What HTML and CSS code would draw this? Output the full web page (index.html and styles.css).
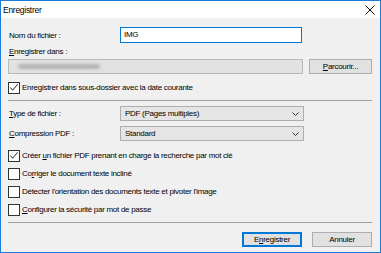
FILE: index.html
```html
<!DOCTYPE html>
<html lang="fr">
<head>
    <meta charset="UTF-8">
    <title>Enregistrer</title>
    <link rel="stylesheet" href="styles.css">
</head>
<body>
    <div class="window">
        <div class="titlebar">
            <span class="title">Enregistrer</span>
            <svg class="close" width="10" height="10" viewBox="0 0 10 10">
                <path d="M0.5 0.5 L9.5 9.5 M9.5 0.5 L0.5 9.5" stroke="#111" stroke-width="1" fill="none"/>
            </svg>
        </div>

        <div class="body">
            <div class="row row-name">
                <span class="label">Nom du fichier :</span>
                <div class="input input-focus">IMG</div>
            </div>

            <div class="label label-dir"><u>E</u>nregistrer dans :</div>
            <div class="row row-dir">
                <div class="input input-disabled"><span class="blur"></span></div>
                <div class="btn btn-browse"><u>P</u>arcourir...</div>
            </div>

            <div class="check check-sub">
                <span class="box checked">
                    <svg width="11" height="11" viewBox="0 0 11 11"><path d="M1.5 5.5 L4 8.5 L9.5 2" stroke="#222" stroke-width="1.1" fill="none"/></svg>
                </span>
                <span>Enregistrer dans sous-dossier avec la date courante</span>
            </div>

            <div class="sep sep-top"></div>

            <div class="row row-select first">
                <span class="label"><u>T</u>ype de fichier :</span>
                <div class="select">
                    <span>PDF (Pages multiples)</span>
                    <svg width="7" height="4" viewBox="0 0 7 4"><path d="M0.5 0.5 L3.5 3.5 L6.5 0.5" stroke="#333" stroke-width="1" fill="none"/></svg>
                </div>
            </div>
            <div class="row row-select">
                <span class="label"><u>C</u>ompression PDF :</span>
                <div class="select">
                    <span>Standard</span>
                    <svg width="7" height="4" viewBox="0 0 7 4"><path d="M0.5 0.5 L3.5 3.5 L6.5 0.5" stroke="#333" stroke-width="1" fill="none"/></svg>
                </div>
            </div>

            <div class="check check-first">
                <span class="box checked">
                    <svg width="11" height="11" viewBox="0 0 11 11"><path d="M1.5 5.5 L4 8.5 L9.5 2" stroke="#222" stroke-width="1.1" fill="none"/></svg>
                </span>
                <span>Créer <u>u</u>n fichier PDF prenant en charge la recherche par mot clé</span>
            </div>
            <div class="check">
                <span class="box"></span>
                <span>Co<u>r</u>riger le document texte incliné</span>
            </div>
            <div class="check">
                <span class="box"></span>
                <span>Détecter l'orientation des documents texte et pivoter l'image</span>
            </div>
            <div class="check">
                <span class="box"></span>
                <span><u>C</u>onfigurer la sécurité par mot de passe</span>
            </div>

            <div class="sep sep-bottom"></div>

            <div class="actions">
                <div class="btn btn-default">E<u>n</u>registrer</div>
                <div class="btn">Annuler</div>
            </div>
        </div>
    </div>
</body>
</html>
```

FILE: styles.css
```css
* {
    box-sizing: border-box;
}

body {
    margin: 0;
    font-family: "Liberation Sans", Arial, sans-serif;
    font-size: 8px;
    letter-spacing: -0.28px;
    color: #000;
    background-color: #f0f0f0;
}

u {
    text-decoration-thickness: 1px;
    text-underline-offset: 1px;
}

.window {
    width: 381px;
    height: 253px;
    border: 1px solid #1c7dd8;
    background-color: #f0f0f0;
    display: flex;
    flex-direction: column;
}

.titlebar {
    height: 17px;
    background-color: white;
    display: flex;
    align-items: center;
    justify-content: space-between;
    padding: 0 5px 0 2px;
}

.title {
    font-size: 8.5px;
}

.close {
    display: block;
}

.body {
    padding: 9px 8px 0 7px;
    display: flex;
    flex-direction: column;
}

.row {
    display: flex;
    align-items: center;
}

.row .label {
    width: 112px;
    padding-left: 1px;
}

.label-dir {
    margin-top: 2px;
    height: 13px;
    line-height: 13px;
    padding-left: 1px;
}

.input {
    height: 16px;
    border: 1px solid #abadb3;
    background-color: white;
    padding: 0 3px;
    line-height: 14px;
    display: flex;
    align-items: center;
}

.input-focus {
    width: 182px;
    border-color: #0078d7;
}

.row-dir {
    margin-top: 1px;
    gap: 6px;
}

.input-disabled {
    width: 295px;
    height: 15px;
    background-color: #e2e2e2;
    border-color: #b8b8b8;
}

.blur {
    display: block;
    width: 82px;
    height: 5px;
    margin-left: 6px;
    background-color: #b4b4b4;
    border-radius: 3px;
    filter: blur(1.5px);
}

.btn {
    height: 15px;
    width: 60px;
    border: 1px solid #adadad;
    background-color: #e1e1e1;
    display: flex;
    align-items: center;
    justify-content: center;
}

.btn-browse {
    width: 63px;
}

.btn-default {
    border: 2px solid #0078d7;
}

.check {
    display: flex;
    align-items: center;
    height: 13px;
    margin-top: 5px;
    gap: 2px;
}

.check-sub {
    margin-top: 7px;
}

.check-first {
    margin-top: 8px;
}

.box {
    width: 12px;
    height: 12px;
    border: 1px solid #333;
    background-color: white;
    display: flex;
    align-items: center;
    justify-content: center;
}

.sep {
    height: 1px;
    background-color: #a0a0a0;
}

.sep-top {
    margin-top: 6px;
}

.sep-bottom {
    margin-top: 6px;
}

.row-select {
    margin-top: 5px;
}

.select {
    width: 184px;
    height: 15px;
    border: 1px solid #adadad;
    background-color: #e5e5e5;
    display: flex;
    align-items: center;
    justify-content: space-between;
    padding: 0 4px 0 4px;
}

.actions {
    display: flex;
    justify-content: flex-end;
    gap: 10px;
    margin-top: 9px;
}
```
